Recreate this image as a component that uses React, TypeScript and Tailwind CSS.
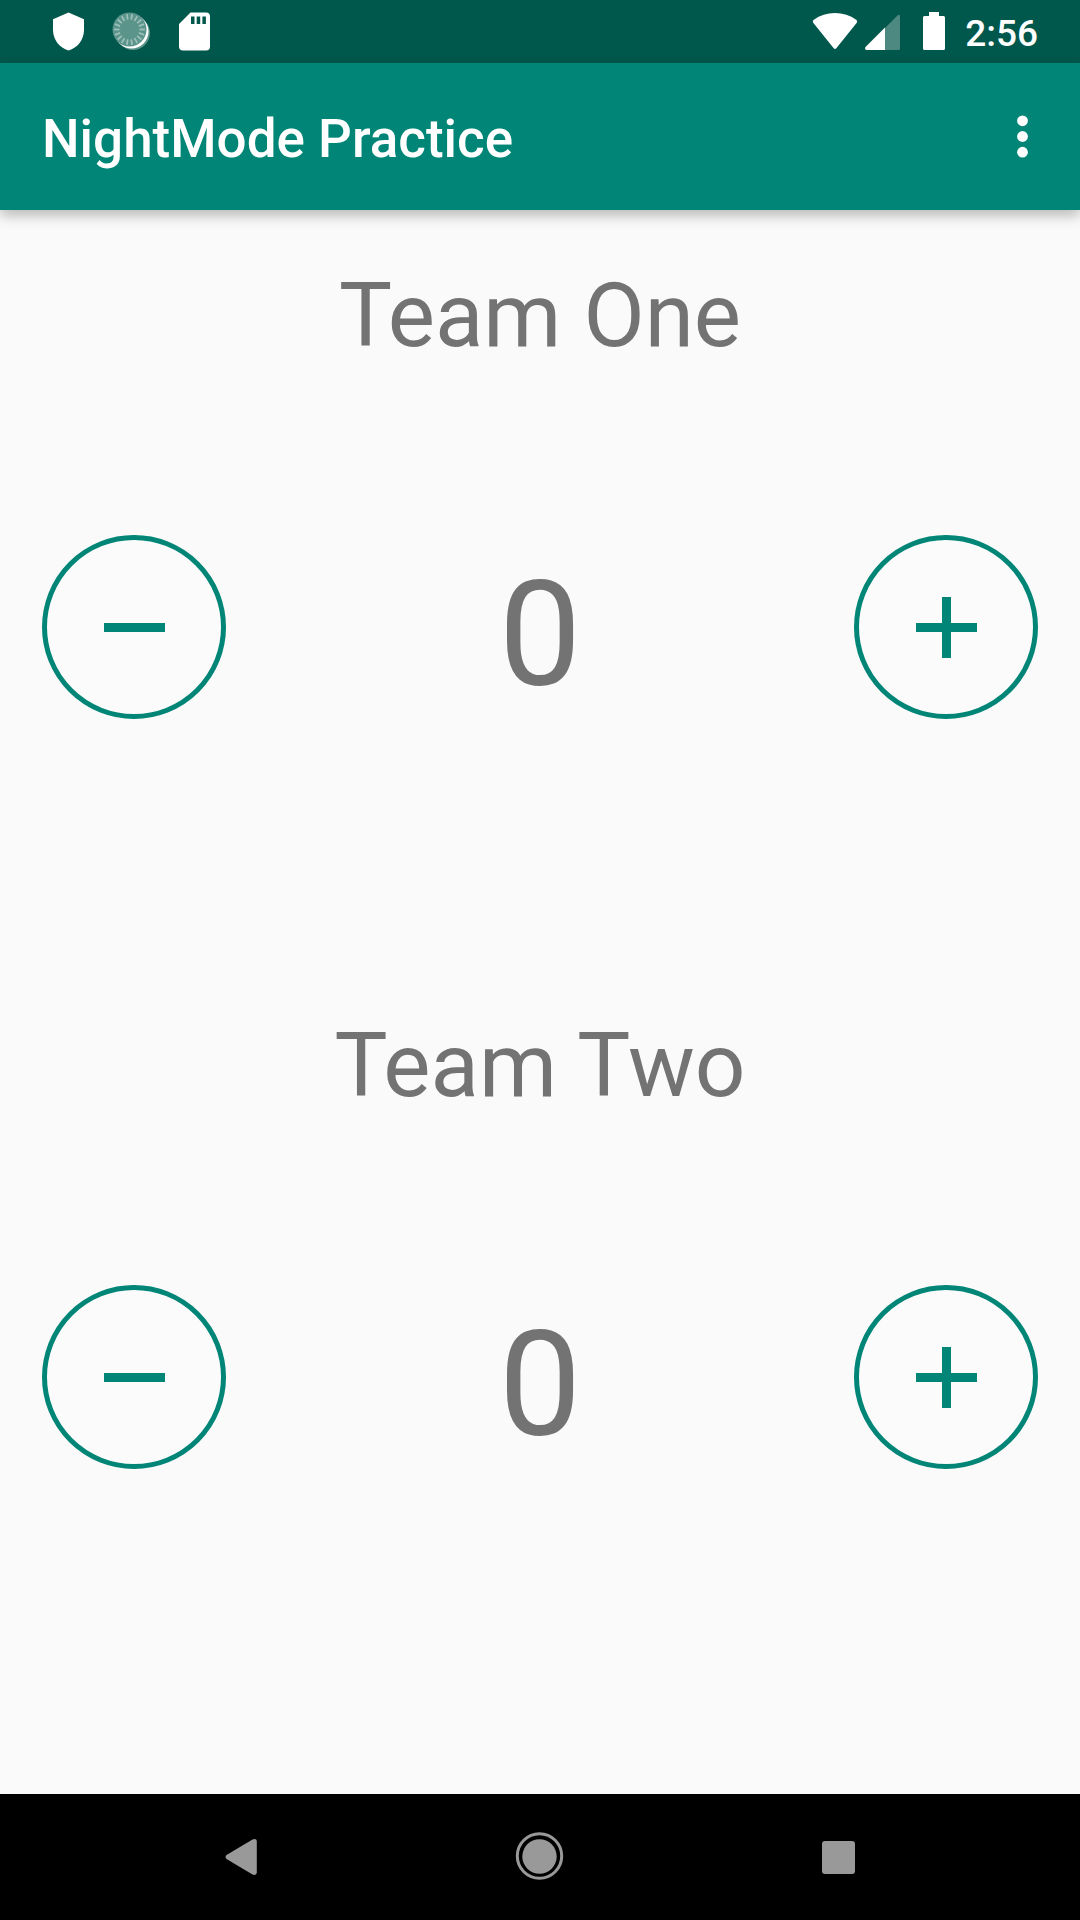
import { useState } from "react";

function ShieldIcon() {
  return (
    <svg viewBox="0 0 46 47" className="h-[47px] w-[46px]" fill="#fff" aria-hidden="true">
      <path d="M23.5 4.5 L39 11.2 V22 C39 31.5 32.5 40 23.5 42.5 C14.5 40 8 31.5 8 22 V11.2 Z" />
    </svg>
  );
}

function SyncIcon() {
  const ticks = Array.from({ length: 18 }, (_, i) => i * 20);
  return (
    <svg viewBox="0 0 46 47" className="h-[47px] w-[46px]" aria-hidden="true">
      <circle cx="25" cy="25" r="17" fill="#5b948b" />
      <circle cx="23.5" cy="23.5" r="17" fill="#fff" />
      <circle cx="21.5" cy="21.5" r="17" fill="#5b948b" />
      {ticks.map((angle) => (
        <path
          key={angle}
          d="M21.5 6 V11.5"
          stroke="#9dc0ba"
          strokeWidth="1.8"
          transform={`rotate(${angle + 10} 21.5 21.5)`}
        />
      ))}
    </svg>
  );
}

function SdCardIcon() {
  return (
    <svg viewBox="0 0 46 47" className="h-[47px] w-[46px]" fill="#fff" aria-hidden="true">
      <path
        fillRule="evenodd"
        d="M19.5 4.5 H35 Q39 4.5 39 8.5 V38.5 Q39 42.5 35 42.5 H12 Q8 42.5 8 38.5 V16 Z M20 8.5 V16 H23.5 V8.5 Z M25.7 8.5 V16 H29.2 V8.5 Z M31.4 8.5 V16 H34.9 V8.5 Z"
      />
    </svg>
  );
}

function WifiIcon() {
  return (
    <svg viewBox="0 0 46 47" className="h-[47px] w-[46px]" fill="#fff" aria-hidden="true">
      <path d="M23 41 Q22.3 41 21.5 40 L1.2 14.8 Q0 13 1.8 11.8 C8 7.3 15 5 23 5 S38 7.3 44.2 11.8 Q46 13 44.8 14.8 L24.5 40 Q23.7 41 23 41 Z" />
    </svg>
  );
}

function SignalIcon() {
  return (
    <svg viewBox="0 0 35 47" className="h-[47px] w-[35px]" fill="#fff" aria-hidden="true">
      <path
        d="M20 42 H33.5 Q35 42 35 40.5 V8 Q34.6 6 32.5 7.5 L20 20 Z"
        opacity="0.3"
      />
      <path d="M20 19.5 V42 H1.5 Q-0.7 41.5 0.5 39 Z" />
    </svg>
  );
}

function BatteryIcon() {
  return (
    <svg viewBox="0 0 22 47" className="h-[47px] w-[22px]" fill="#fff" aria-hidden="true">
      <path d="M6 4 H16 V8 H20.5 Q22 8 22 9.5 V40.5 Q22 42 20.5 42 H1.5 Q0 42 0 40.5 V9.5 Q0 8 1.5 8 H6 Z" />
    </svg>
  );
}

function StatusBar() {
  return (
    <div className="flex h-[63px] items-start justify-between bg-[#00574b] pt-2 pr-[42px] pl-[45px]">
      <div className="flex gap-[17px]">
        <ShieldIcon />
        <SyncIcon />
        <SdCardIcon />
      </div>
      <div className="flex">
        <WifiIcon />
        <div className="ml-[7px]">
          <SignalIcon />
        </div>
        <div className="ml-[23px]">
          <BatteryIcon />
        </div>
        <time className="ml-5 text-[37px] leading-[52px] font-medium text-white">2:56</time>
      </div>
    </div>
  );
}

function AppBar() {
  return (
    <header className="z-10 flex h-[147px] items-center justify-between bg-[#008577] pr-4 pl-[42px] shadow-[0_6px_12px_rgba(0,0,0,0.25)]">
      <h1 className="pt-1 text-[53px] leading-[64px] font-medium text-white">NightMode Practice</h1>
      <button type="button" aria-label="More options" className="flex h-[126px] w-[84px] items-center justify-center">
        <svg viewBox="0 0 12 44" className="h-[44px] w-[12px]" fill="#fff" aria-hidden="true">
          <circle cx="6.5" cy="5.8" r="5.4" />
          <circle cx="6.5" cy="21.5" r="5.4" />
          <circle cx="6.5" cy="37.2" r="5.4" />
        </svg>
      </button>
    </header>
  );
}

function RoundButton({ label, plus, onClick }: { label: string; plus?: boolean; onClick: () => void }) {
  return (
    <button
      type="button"
      aria-label={label}
      onClick={onClick}
      className="flex size-[184px] items-center justify-center rounded-full border-5 border-[#008577] bg-[#fbfbfb]"
    >
      <svg viewBox="0 0 62 62" className="size-[62px]" fill="#008577" aria-hidden="true">
        <rect x="1" y="27" width="61" height="9" />
        {plus && <rect x="27" y="1" width="9" height="61" />}
      </svg>
    </button>
  );
}

function TeamCounter({ name }: { name: string }) {
  const [score, setScore] = useState(0);
  return (
    <section className="grid flex-1 grid-rows-[1fr_auto_1fr] text-[#737373]">
      <h2 className="text-center text-[89px] leading-[128px]">{name}</h2>
      <div className="flex items-center justify-between">
        <RoundButton label={`Decrease ${name} score`} onClick={() => setScore(score - 1)} />
        <output className="pt-4 text-[147px] leading-[168px]">{score}</output>
        <RoundButton label={`Increase ${name} score`} plus onClick={() => setScore(score + 1)} />
      </div>
    </section>
  );
}

function NavigationBar() {
  return (
    <nav className="flex h-[126px] bg-black px-[93px]">
      <button type="button" aria-label="Back" className="flex flex-1 items-center justify-center">
        <svg viewBox="0 0 34 40" className="h-[40px] w-[34px]" fill="#999" aria-hidden="true">
          <path d="M1.5 22 Q-0.5 20 1.5 18 L27.5 2.5 Q31.500 1 31.800 4 V35.500 Q31.500 39 27.500 37.500 Z" />
        </svg>
      </button>
      <button type="button" aria-label="Home" className="flex flex-1 items-center justify-center">
        <svg viewBox="0 0 50 50" className="size-[50px]" aria-hidden="true">
          <circle cx="24.5" cy="24" r="22.2" fill="none" stroke="#999" strokeWidth="3" />
          <circle cx="24.5" cy="24.5" r="17.2" fill="#999" />
        </svg>
      </button>
      <button type="button" aria-label="Overview" className="flex flex-1 items-center justify-center">
        <span className="size-[33px] rounded-[3px] bg-[#999]" />
      </button>
    </nav>
  );
}

export default function App() {
  return (
    <div className="flex min-h-screen flex-col bg-[#fafafa] font-['Roboto',sans-serif]">
      <StatusBar />
      <AppBar />
      <main className="flex flex-1 flex-col p-[42px]">
        <TeamCounter name="Team One" />
        <TeamCounter name="Team Two" />
      </main>
      <NavigationBar />
    </div>
  );
}
